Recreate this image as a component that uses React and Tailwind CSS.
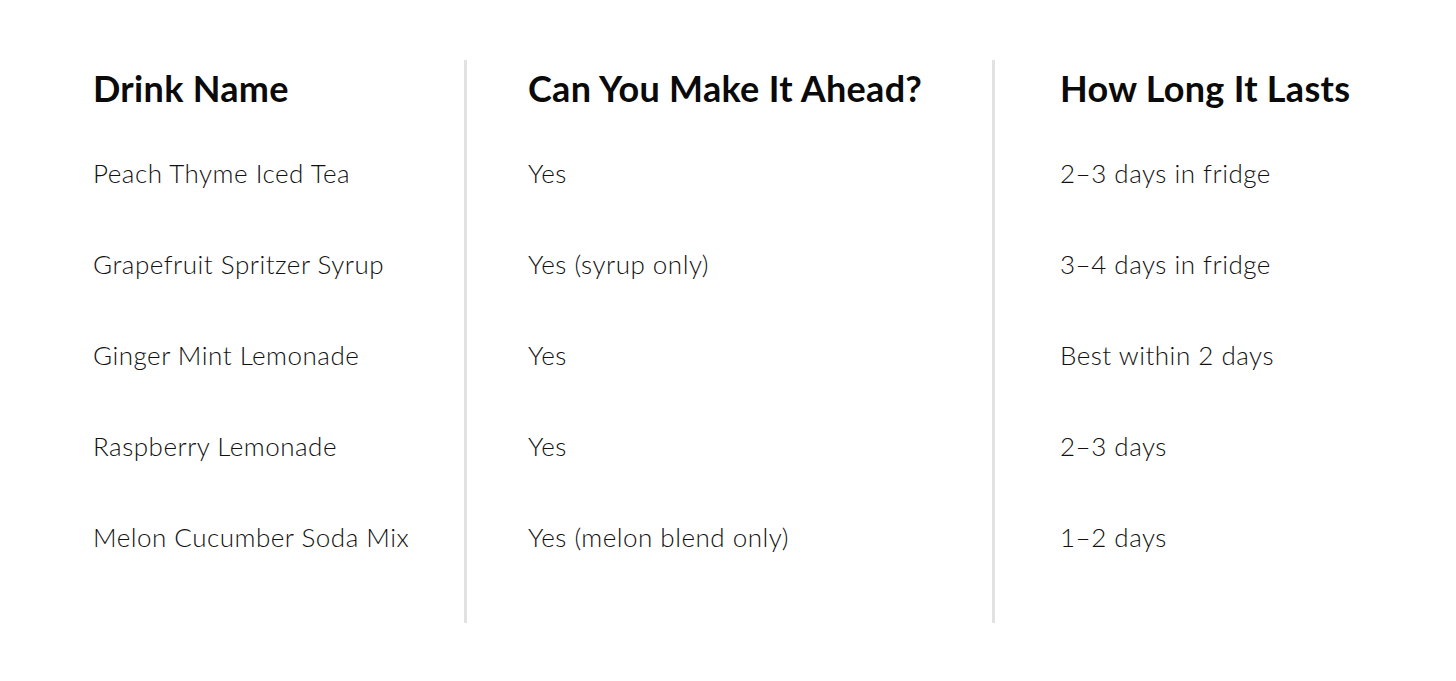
import React from 'react';

const rows = [
  ["Peach Thyme Iced Tea", "Yes", "2–3 days in fridge"],
  ["Grapefruit Spritzer Syrup", "Yes (syrup only)", "3–4 days in fridge"],
  ["Ginger Mint Lemonade", "Yes", "Best within 2 days"],
  ["Raspberry Lemonade", "Yes", "2–3 days"],
  ["Melon Cucumber Soda Mix", "Yes (melon blend only)", "1–2 days"],
];

const headers = ["Drink Name", "Can You Make It Ahead?", "How Long It Lasts"];

function Column({ title, items, className }) {
  return (
    <div className={`flex flex-col pb-[40px] ${className}`}>
      <h2 className="h-[56px] leading-[56px] text-[36px] font-bold text-[#0a0a0a] whitespace-nowrap tracking-[0.3px]">
        {title}
      </h2>
      <ul className="mt-[12px]">
        {items.map((item) => (
          <li key={item} className="h-[91px] leading-[91px] text-[26px] font-light text-[#111111] whitespace-nowrap tracking-[0.5px]">
            {item}
          </li>
        ))}
      </ul>
    </div>
  );
}

export default function App() {
  return (
    <div className="w-[1456px] h-[681px] bg-white overflow-hidden" style={{ fontFamily: 'Lato, "Noto Sans", sans-serif' }}>
      <div className="flex pt-[60px]">
        <Column title={headers[0]} items={rows.map((r) => r[0])} className="w-[464px] pl-[93px]" />
        <Column title={headers[1]} items={rows.map((r) => r[1])} className="w-[528px] pl-[61px] border-l-[3px] border-[#e2e2e2]" />
        <Column title={headers[2]} items={rows.map((r) => r[2])} className="flex-1 pl-[65px] border-l-[3px] border-[#e2e2e2]" />
      </div>
    </div>
  );
}
